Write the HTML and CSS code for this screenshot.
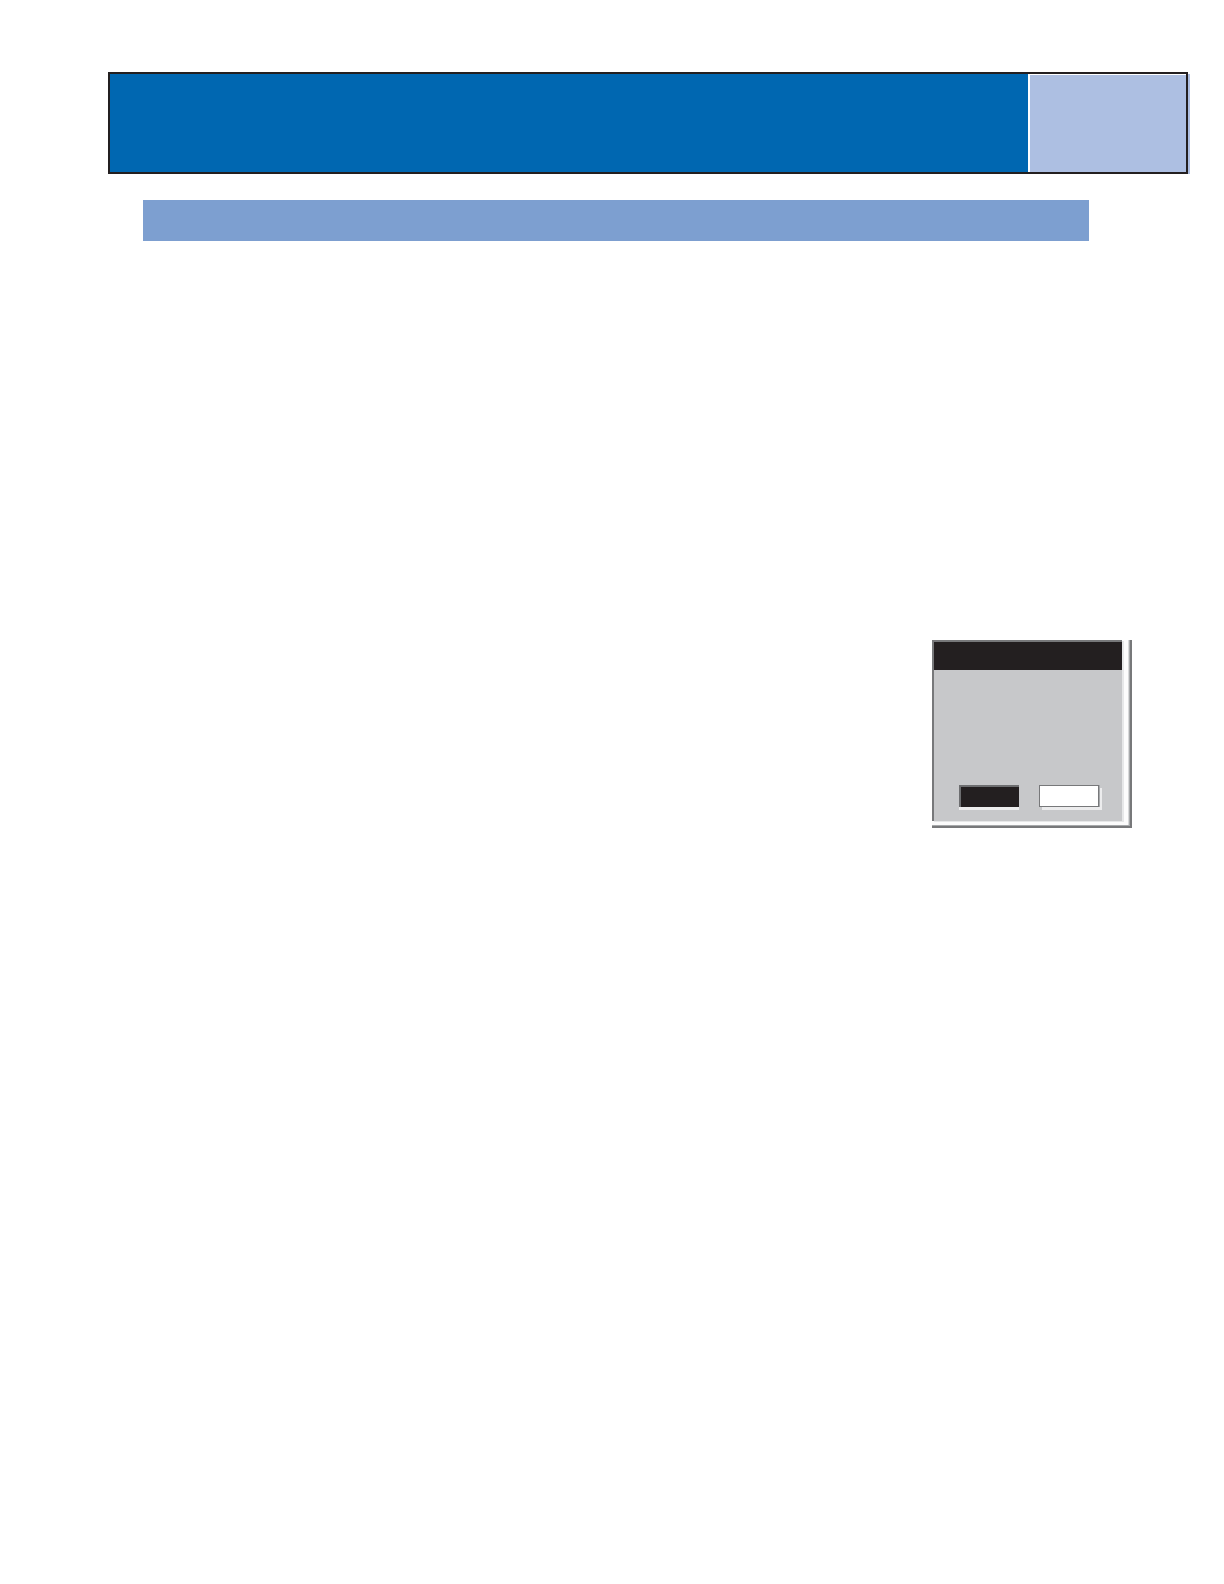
FILE: index.html
```html
<!DOCTYPE html>
<html lang="en">
<head>
    <meta charset="UTF-8">
    <meta name="viewport" content="width=device-width, initial-scale=1.0">
    <title>Manual Page</title>
    <link rel="stylesheet" href="styles.css">
</head>
<body>
    <div class="page">
        <header class="header">
            <div class="header-title"></div>
            <div class="header-tab"></div>
        </header>

        <div class="section-bar"></div>

        <main class="content">
            <div class="dialog" role="group" aria-label="Dialog">
                <div class="dialog-frame">
                    <div class="dialog-title"></div>
                    <div class="dialog-buttons">
                        <button class="btn btn-dark" type="button" aria-label="Yes"></button>
                        <button class="btn btn-light" type="button" aria-label="No"></button>
                    </div>
                </div>
            </div>
        </main>
    </div>
</body>
</html>
```
FILE: styles.css
```css
* {
    box-sizing: border-box;
}
body {
    font-family: "Liberation Sans", Arial, sans-serif;
    background: #fff;
    margin: 0;
}
.page {
    padding: 72px 36px 72px 108px;
}
.header {
    display: flex;
    height: 102px;
    border: 2px solid #231f20;
    box-shadow: 3px 1px 0 -1px #adbee1;
}
.header-title {
    flex: 1;
    background: #0067b1;
}
.header-tab {
    width: 158px;
    background: #adbfe2;
    border-top: 1px solid #fff;
    border-left: 2px solid #fff;
}
.section-bar {
    height: 41px;
    margin: 26px 99px 0 35px;
    background: #7d9fd0;
}
.content {
    display: flex;
    justify-content: flex-end;
    padding: 399px 56px 0 0;
}

/* bevelled dialog box */
.dialog {
    width: 200px;
    border-style: solid;
    border-width: 0 2px 2px 0;
    border-color: #77787a;
    box-shadow: inset -1px -1px 0 #a7a9ab, inset -2px -1px 0 #d8d9da;
    background: #fcfcfc;
    padding: 0 8px 5px 0;
}
.dialog-frame {
    display: flex;
    flex-direction: column;
    justify-content: space-between;
    height: 181px;
    border-top: 2px solid #77787a;
    border-left: 2px solid #77787a;
    background: #c7c8ca;
    box-shadow: 2px 1px 0 #e6e7e8;
}
.dialog-title {
    height: 28px;
    background: #231f20;
}
.dialog-buttons {
    display: flex;
    gap: 20px;
    padding: 0 22px 14px 25px;
}
.btn {
    width: 60px;
    height: 22px;
    padding: 0;
    border-radius: 0;
}
.btn-dark {
    border: 0 solid #6d6e70;
    border-width: 2px 0 0 2px;
    background: #231f20;
    box-shadow: 0 3px 0 #ececed;
}
.btn-light {
    border: 1px solid #77787a;
    background: #fff;
    box-shadow: 1px 0 0 #a7a9ab, 3px 3px 0 #ececed;
}
```
